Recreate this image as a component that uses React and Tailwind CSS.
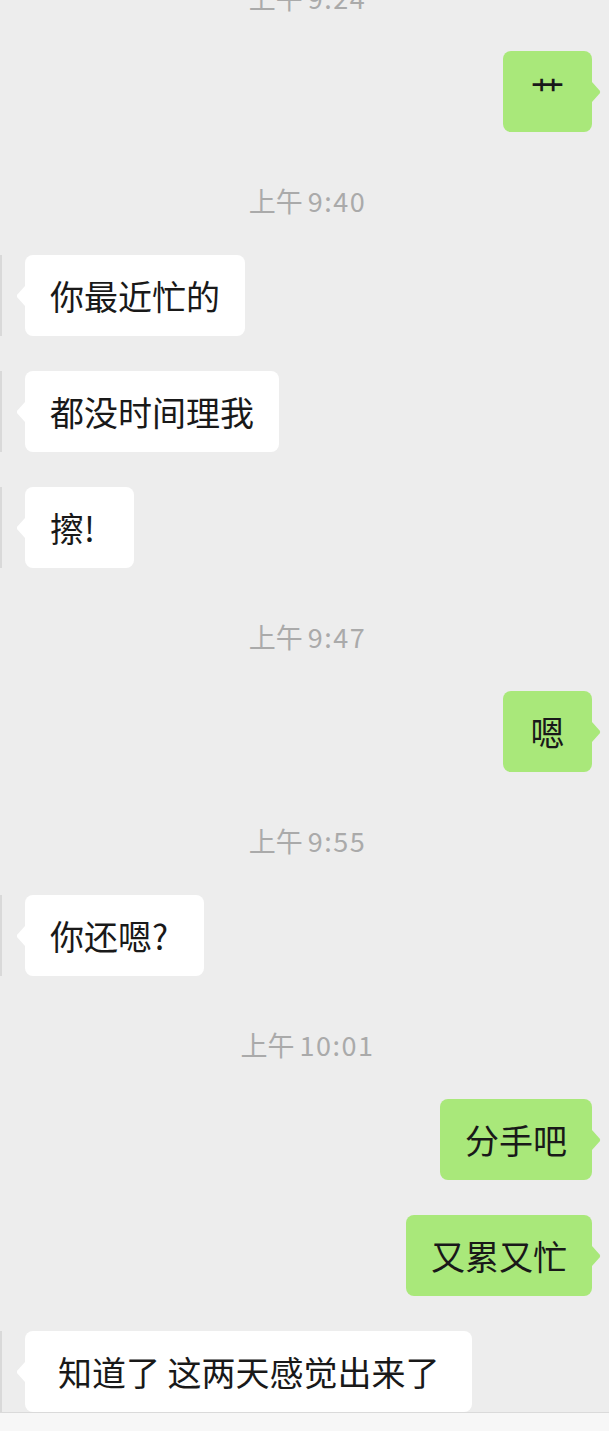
import React from 'react'

const FONT = "font-['Noto_Sans_CJK_SC','Noto_Sans',sans-serif]"

function Tail({ mine }) {
    if (mine) {
        return (
            <svg className="absolute left-full top-1/2 -translate-y-1/2" width="9" height="20" viewBox="0 0 9 20">
                <path d="M0 0 L7.6 8.4 Q8.8 10 7.6 11.6 L0 20 Z" fill="#a9e87a" />
            </svg>
        )
    }
    return (
        <svg className="absolute right-full top-1/2 -translate-y-1/2" width="9" height="20" viewBox="0 0 9 20">
            <path d="M9 0 L1.4 8.4 Q0.2 10 1.4 11.6 L9 20 Z" fill="#ffffff" />
        </svg>
    )
}

function Bubble({ mine, text, width = '', pad = 'px-[25px]' }) {
    const tone = mine ? 'bg-[#a9e87a]' : 'bg-white'
    return (
        <div className={`relative rounded-[8px] ${tone} ${pad} ${width} h-[81px] py-[17px] text-[34px] leading-[47px] text-[#191919] whitespace-pre`}>
            {text}
            <Tail mine={mine} />
        </div>
    )
}

function Time({ date, time, top }) {
    return (
        <div className={`${top} h-[40px] flex items-center justify-center pl-[6px] text-[27px] text-[#aaaaaa]`}>
            <span>{date}</span>
            <span className="ml-[5px] tracking-[1.5px]">{time}</span>
        </div>
    )
}

function Mine({ text, top = 'mt-[35px]', width }) {
    return (
        <div className={`${top} flex justify-end pr-[17px]`}>
            <Bubble mine text={text} width={width} />
        </div>
    )
}

function Theirs({ text, top = 'mt-[35px]', width, pad }) {
    return (
        <div className={`${top} flex items-start`}>
            <div className="w-[2px] h-[81px] bg-[#d9d9d9]" />
            <div className="ml-[23px]">
                <Bubble text={text} width={width} pad={pad} />
            </div>
        </div>
    )
}

export default function App() {
    return (
        <div className={`${FONT} w-[609px] h-[1431px] overflow-hidden flex flex-col bg-[#ededed]`}>
            <Time date="上午" time="9:24" top="-mt-[22px]" />
            <Mine text="艹" top="mt-[33px]" width="w-[89px] text-center" />

            <Time date="上午" time="9:40" top="mt-[49px]" />
            <Theirs text="你最近忙的" top="mt-[34px]" />
            <Theirs text="都没时间理我" />
            <Theirs text="擦!" width="w-[109px]" />

            <Time date="上午" time="9:47" top="mt-[49px]" />
            <Mine text="嗯" top="mt-[34px]" width="w-[89px] text-center" />

            <Time date="上午" time="9:55" top="mt-[49px]" />
            <Theirs text="你还嗯?" top="mt-[34px]" width="w-[179px]" />

            <Time date="上午" time="10:01" top="mt-[49px]" />
            <Mine text="分手吧" top="mt-[34px]" />
            <Mine text="又累又忙" />
            <Theirs text="知道了 这两天感觉出来了" width="w-[447px]" pad="pl-[33px] pr-[20px]" />

            <div className="flex-1 border-t border-[#dadada] bg-[#f7f7f7]" />
        </div>
    )
}
